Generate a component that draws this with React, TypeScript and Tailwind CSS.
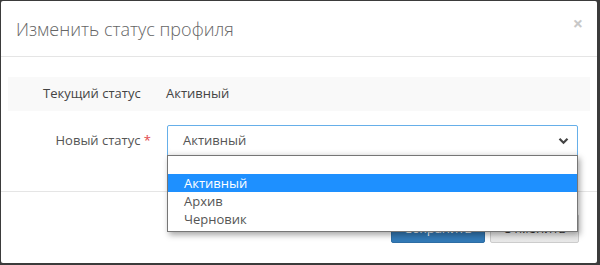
import * as React from 'react'

const font = { fontFamily: '"Open Sans", "Noto Sans", sans-serif' }

function Chevron() {
  return (
    <svg width="11" height="8" viewBox="0 0 11 8" className="text-[#444]">
      <path d="M1.5 1.8 L5.5 5.8 L9.5 1.8" fill="none" stroke="currentColor" strokeWidth="2.2" />
    </svg>
  )
}

export default function App() {
  const options = ['', 'Активный', 'Архив', 'Черновик']

  return (
    <div className="w-[600px] h-[265px] bg-[#3b3b3b] pt-px pl-px overflow-hidden" style={font}>
      <div className="relative w-[596px] h-[262px] bg-white rounded-[2px]">
        {/* шапка */}
        <div className="h-[56px] border-b border-[#e5e5e5] pl-[15px] pr-[14px] flex items-center justify-between">
          <h4 className="text-[18px] text-[#666] font-light leading-none">Изменить статус профиля</h4>
          <span className="text-[18px] leading-none text-[#c8c8c8] font-bold mb-[12px]">×</span>
        </div>

        {/* тело */}
        <div className="px-[7px] pt-[20px] h-[134px]">
          <div className="h-[34px] bg-[#f9f9f9] flex items-center text-[13px] text-[#444]">
            <span className="pl-[35px] w-[158px]">Текущий статус</span>
            <span>Активный</span>
          </div>
          <div className="mt-[14px] flex items-center text-[13px]">
            <label className="w-[145px] text-right text-[#555] pr-[2px]">
              Новый статус <span className="text-[#e2474b]">*</span>
            </label>
            <div className="ml-[14px] w-[411px] h-[32px] border border-[#66afe9] rounded-[2px] flex items-center justify-between pl-[15px] pr-[8px] text-[#555] shadow-[inset_0_-6px_6px_-4px_rgba(0,0,0,0.08)]">
              <span>Активный</span>
              <Chevron />
            </div>
          </div>
        </div>

        {/* подвал */}
        <div className="border-t border-[#e5e5e5] flex justify-end gap-[5px] pr-[18px] pt-[22px]">
          <button className="w-[94px] h-[29px] bg-[#337ab7] border border-[#2e6da4] rounded-[2px] text-white text-[13px]">
            Сохранить
          </button>
          <button className="w-[89px] h-[29px] bg-gradient-to-b from-white to-[#e8e8e8] border border-[#ccc] rounded-[2px] text-[#333] text-[13px]">
            Отменить
          </button>
        </div>

        {/* выпадающий список */}
        <div className="absolute left-[166px] top-[154px] w-[411px] bg-white border border-[#767676] shadow-[2px_3px_6px_rgba(0,0,0,0.35)] text-[13px] pb-[3px]">
          {options.map((o, i) => (
            <div
              key={i}
              className={
                'h-[18px] leading-[18px] pl-[16px] ' +
                (o === 'Активный' ? 'bg-[#1e90ff] text-white' : 'text-[#555]')
              }
            >
              {o}
            </div>
          ))}
        </div>
      </div>
    </div>
  )
}
